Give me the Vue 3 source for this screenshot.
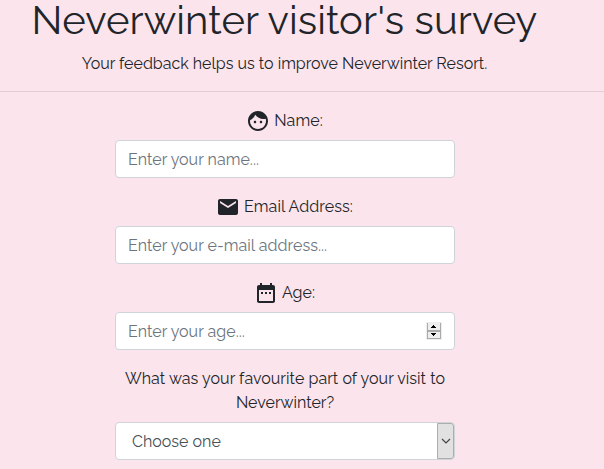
<script setup>
const fields = [
  { id: 'name', label: 'Name:', placeholder: 'Enter your name...', type: 'text' },
  { id: 'email', label: 'Email Address:', placeholder: 'Enter your e-mail address...', type: 'email' },
  { id: 'age', label: 'Age:', placeholder: 'Enter your age...', type: 'text' },
]
const icons = {
  name: 'M9 11.75c-.69 0-1.25.56-1.25 1.25s.56 1.25 1.25 1.25 1.25-.56 1.25-1.25-.56-1.25-1.25-1.25zm6 0c-.69 0-1.25.56-1.25 1.25s.56 1.25 1.25 1.25 1.25-.56 1.25-1.25-.56-1.25-1.25-1.25zM12 2C6.48 2 2 6.48 2 12s4.48 10 10 10 10-4.48 10-10S17.52 2 12 2zm0 18c-4.41 0-8-3.59-8-8 0-.29.02-.58.05-.86 2.36-1.05 4.23-2.98 5.21-5.37C11.07 8.33 14.05 10 17.42 10c.78 0 1.53-.09 2.25-.26.21.71.33 1.47.33 2.26 0 4.41-3.59 8-8 8z',
  email: 'M20 4H4c-1.1 0-1.99.9-1.99 2L2 18c0 1.1.9 2 2 2h16c1.1 0 2-.9 2-2V6c0-1.1-.9-2-2-2zm0 4l-8 5-8-5V6l8 5 8-5v2z',
  age: 'M9 11H7v2h2v-2zm4 0h-2v2h2v-2zm4 0h-2v2h2v-2zm2-7h-1V2h-2v2H8V2H6v2H5c-1.11 0-1.99.9-1.99 2L3 20c0 1.1.89 2 2 2h14c1.1 0 2-.9 2-2V6c0-1.1-.9-2-2-2zm0 16H5V9h14v11z',
}
</script>

<template>
  <main class="page">
    <header class="header">
      <h1>Neverwinter visitor's survey</h1>
      <p>Your feedback helps us to improve Neverwinter Resort.</p>
    </header>
    <hr />
    <form class="form">
      <div v-for="f in fields" :key="f.id" class="group">
        <label :for="f.id" class="label">
          <svg class="icon" viewBox="0 0 24 24"><path :d="icons[f.id]" /></svg>
          <span class="label-text">{{ f.label }}</span>
        </label>
        <div class="control">
          <input :id="f.id" :type="f.type" :placeholder="f.placeholder" />
          <svg v-if="f.id === 'age'" class="spinner" viewBox="0 0 16 18" shape-rendering="crispEdges">
            <path fill="#eee" d="M0 0h16v18H0z" />
            <path fill="#aaa" d="M1 1h1v16H1zM14 1h1v16h-1zM1 8h14v2H1zM1 16h14v1H1z" />
            <path fill="#000" d="M7 3h1v1h1v1h1v1H5V5h1V4h1zM5 11h5v1H9v1H8v1H7v-1H6v-1H5z" />
          </svg>
        </div>
      </div>
      <div class="group">
        <label class="question"><span class="lead">What was your favourite part of your visit to</span><br />Neverwinter?</label>
        <div class="control select">
          <span class="value">Choose one</span>
          <span class="arrow"><svg viewBox="0 0 10 6"><path d="M1 1l4 4 4-4" /></svg></span>
        </div>
      </div>
    </form>
  </main>
</template>

<style>
body {
  background: #fce4ec;
  overflow: hidden;
}
</style>

<style scoped>
.page {
  height: 469px;
  overflow: hidden;
  color: #212529;
  background: #fce4ec;
  font: 400 16px/24px Raleway, Lato, sans-serif;
}
.header {
  width: 569px;
  text-align: center;
  white-space: nowrap;
}
h1 {
  margin: 0 0 12px;
  font-size: 40px;
  font-weight: 400;
  line-height: 40px;
  letter-spacing: 0.1px;
}
p {
  margin: 0 0 15px;
}
hr {
  height: 1px;
  margin: 0 0 16px;
  border: 0;
  background: #e3cdd4;
}
.form {
  width: 340px;
  margin-left: 115px;
}
.group {
  margin-bottom: 16px;
}
.label {
  display: flex;
  justify-content: center;
  gap: 4px;
  height: 24px;
  margin: 0 1px 8px 0;
}
.icon {
  width: 24px;
  height: 24px;
  margin-top: 1px;
  fill: #212529;
}
.label-text {
  padding-top: 1px;
  letter-spacing: 0.08px;
}
.control {
  display: flex;
  align-items: center;
  box-sizing: border-box;
  height: 38px;
  padding: 0 12px;
  border: 1px solid #ced4da;
  border-radius: 4px;
  background: #fff;
}
input {
  flex: 1;
  min-width: 0;
  height: 24px;
  padding: 2px 0 0;
  border: 0;
  outline: 0;
  background: none;
  color: #495057;
  font: inherit;
  letter-spacing: 0.04px;
}
input::placeholder {
  color: #6c757d;
  opacity: 1;
}
.spinner {
  width: 16px;
  height: 18px;
}
.question {
  display: block;
  padding-top: 1px;
  margin-bottom: 7px;
  text-align: center;
  white-space: nowrap;
}
.lead {
  letter-spacing: 0.06px;
}
.select {
  justify-content: space-between;
  padding: 0 0 0 16px;
  color: #495057;
}
.value {
  padding-top: 2px;
}
.arrow {
  display: flex;
  align-items: center;
  justify-content: center;
  box-sizing: border-box;
  width: 17px;
  height: 36px;
  border: 1px solid #adadad;
  border-radius: 0 3px 3px 0;
  background: #e1e1e1;
}
.arrow svg {
  width: 10px;
  height: 6px;
  fill: none;
  stroke: #444;
  stroke-width: 1.2;
}
</style>
